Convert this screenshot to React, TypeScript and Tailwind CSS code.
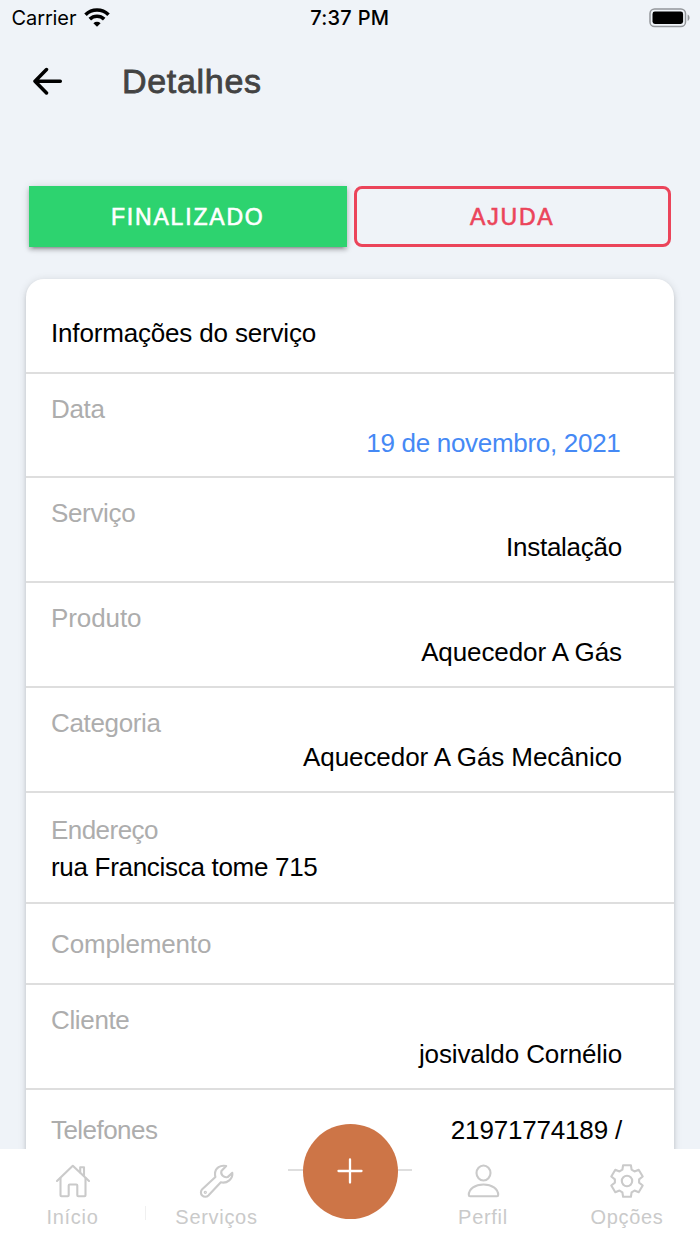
import * as React from "react"

const HELVETICA = "font-['Liberation_Sans',Arial,sans-serif]"

type ServiceField = {
  label: string
  value?: string
  layout: "stacked" | "block" | "inline"
  rowClass: string
  labelClass?: string
  valueClass?: string
}

const FIELDS: ServiceField[] = [
  { label: "Data", value: "19 de novembro, 2021", layout: "stacked", rowClass: "h-[104px]", valueClass: "text-[#4589f5] tracking-[-0.3px] pr-[1.5px]" },
  { label: "Serviço", value: "Instalação", layout: "stacked", rowClass: "h-[105px]", valueClass: "tracking-[-0.25px]" },
  { label: "Produto", value: "Aquecedor A Gás", layout: "stacked", rowClass: "h-[105px]", labelClass: "tracking-[-0.1px]", valueClass: "tracking-[-0.1px]" },
  { label: "Categoria", value: "Aquecedor A Gás Mecânico", layout: "stacked", rowClass: "h-[105px]", valueClass: "tracking-[-0.08px]" },
  { label: "Endereço", value: "rua Francisca tome 715", layout: "block", rowClass: "h-[111px]", labelClass: "tracking-[-0.55px]", valueClass: "tracking-[-0.3px]" },
  { label: "Complemento", layout: "inline", rowClass: "h-[81px]", labelClass: "tracking-[-0.15px]" },
  { label: "Cliente", value: "josivaldo Cornélio", layout: "stacked", rowClass: "h-[105px]", valueClass: "tracking-[-0.12px]" },
  { label: "Telefones", value: "21971774189 /", layout: "inline", rowClass: "h-[105px]", labelClass: "tracking-[-0.55px]", valueClass: "tracking-[-0.18px]" },
]

function StatusBar() {
  return (
    <div className="h-9 grid grid-cols-3 items-center pl-[11.5px] pr-[9px] font-[Inter,sans-serif] text-[20px] leading-9 text-black">
      <div className="flex items-center gap-2">
        <span className="tracking-[-0.1px]">Carrier</span>
        <svg className="-mt-[2px]" width="26" height="19" viewBox="0 0 26 19" fill="none" stroke="#000" strokeWidth="3.6">
          <path d="M1.5 6.7a16.4 16.4 0 0 1 23 0" />
          <path d="M5.8 11.1a10.4 10.4 0 0 1 14.4 0" />
          <path d="M13 18.8l-3.6-3.6a5.2 5.2 0 0 1 7.2 0z" fill="#000" stroke="none" />
        </svg>
      </div>
      <span className="text-center font-medium tracking-[0.25px] pr-[3px]">7:37 PM</span>
      <svg className="justify-self-end -mt-px" width="42" height="20" viewBox="0 0 42 20" fill="none">
        <rect x="1" y="1" width="35.5" height="17.6" rx="4.6" stroke="#94979b" strokeWidth="1.5" />
        <rect x="3.5" y="3.6" width="30.6" height="12.4" rx="2.4" fill="#000" />
        <path d="M38.6 6.6c2.6 1 2.6 5.4 0 6.4z" fill="#94979b" />
      </svg>
    </div>
  )
}

function FieldRow({ field }: { field: ServiceField }) {
  const { label, value, layout, rowClass, labelClass = "tracking-[-0.35px]", valueClass = "" } = field
  const caption = <span className={`text-[#adadad] ${labelClass}`}>{label}</span>

  if (layout === "stacked") {
    return (
      <div className={`border-b-2 border-[#dedede] pt-[18px] pl-[25px] pr-[52px] flex flex-col ${rowClass}`}>
        {caption}
        <span className={`text-right ${valueClass}`}>{value}</span>
      </div>
    )
  }
  if (layout === "block") {
    return (
      <div className={`border-b-2 border-[#dedede] pt-[20px] pl-[25px] pr-[52px] flex flex-col gap-[3px] ${rowClass}`}>
        {caption}
        <span className={valueClass}>{value}</span>
      </div>
    )
  }
  return (
    <div className={`border-b-2 border-[#dedede] pt-[23px] pl-[25px] pr-[52px] flex justify-between ${rowClass}`}>
      {caption}
      {value && <span className={valueClass}>{value}</span>}
    </div>
  )
}

function TabButton({ label, className, children }: { label: string; className: string; children: React.ReactNode }) {
  return (
    <button className={`w-36 pt-[14px] flex flex-col items-center text-[#cacaca] ${className}`}>
      <svg width="36" height="36" viewBox="0 0 36 36" fill="none" stroke="currentColor" strokeWidth="2.1" strokeLinecap="round" strokeLinejoin="round">
        {children}
      </svg>
      <span className="mt-1 text-[20px] leading-7 tracking-[0.7px]">{label}</span>
    </button>
  )
}

function TabBar() {
  return (
    <nav className="relative h-[95px] shrink-0 bg-white flex">
      <TabButton label="Início" className="pl-px">
        <path d="M2 18 17.8 2.8 34 18" />
        <path d="M5.5 15v17.3q0 1 1 1h6.2q1 0 1-1V22.5q0-1 1-1h6.6q1 0 1 1v9.8q0 1 1 1h6.2q1 0 1-1V15" />
        <path d="M25.2 9.5V4.3H29v8.500" />
      </TabButton>
      <TabButton label="Serviços" className="pl-px">
        <path d="M27.2 3.1c-5.500-1.500-11.200 1.800-11.200 8q0 1.600.4 2.900L3.200 26.300a4.300 4.300 0 0 0 6.200 6.200L21.800 19.300c6.400 1.500 12.400-3.600 11.500-9.400l-4.700 4.200c-3.800 1-7.200-2.300-6.200-6z" />
        <circle cx="6.3" cy="29.3" r="0.6" />
      </TabButton>
      <div className="w-[124px] h-full">
        <div className="mt-[20px] h-[2px] bg-[#dedede]" />
      </div>
      <TabButton label="Perfil" className="pr-[2px]">
        <ellipse cx="18.500" cy="10" rx="7" ry="7.5" />
        <path d="M3.800 32c0-6.500 6.500-10.500 14.700-10.500S33.200 25.500 33.200 32q0 1.200-1.200 1.200H5q-1.200 0-1.200-1.200z" />
      </TabButton>
      <TabButton label="Opções" className="pr-[2px]">
        {/* six-toothed gear */}
        <path d="M14.1 2.200h7.800l.7 4.500 2.900 1.700 4.200-1.600 4 6.700-3.600 2.900v3.200l3.600 2.900-4 6.700-4.200-1.600-2.900 1.700-.7 4.500h-7.800l-.7-4.500-2.900-1.700-4.200 1.600-4-6.700 3.600-2.900v-3.200l-3.600-2.900 4-6.700 4.200 1.600 2.900-1.700z" />
        <circle cx="18" cy="18" r="5.2" />
      </TabButton>
      <span className="absolute left-[145px] top-[57px] w-px h-[14px] bg-[#f0f0f0]" />
      <button className="absolute left-[302.5px] top-[-25.5px] size-[95px] rounded-full bg-[#cd7547] flex items-center justify-center">
        <svg width="26" height="26" viewBox="0 0 26 26" stroke="#fff" strokeWidth="2.3" strokeLinecap="round">
          <path d="M13 1.5v23M1.5 13h23" />
        </svg>
      </button>
    </nav>
  )
}

export default function App() {
  return (
    <div className={`w-[700px] h-[1244px] overflow-hidden flex flex-col bg-[#eff3f8] text-black ${HELVETICA}`}>
      <StatusBar />

      <header className="h-[90px] shrink-0 flex items-center pl-8 gap-[59px]">
        <svg width="31" height="28" viewBox="0 0 31 28" fill="none" stroke="#000" strokeWidth="3.5" strokeLinecap="round" strokeLinejoin="round">
          <path d="M14.5 2.5 3 14.2l11.500 11.700M3.500 14.2h24.800" />
        </svg>
        <h1 className="text-[34px] leading-10 text-[#434343] tracking-[0.7px] [-webkit-text-stroke:0.8px_#434343]">Detalhes</h1>
      </header>

      <main className="flex-1 min-h-0 overflow-hidden">
        {/* Actions */}
        <div className="pt-[60px] pl-[29px] pr-[29px] flex gap-[7px] text-[23px] tracking-[1.8px]">
          <button className="w-[318px] h-[61px] pt-px bg-[#2dd36f] text-white [-webkit-text-stroke:0.6px_#fff] shadow-[0_5px_2px_-4px_rgba(0,0,0,0.2),0_3px_4px_0_rgba(0,0,0,0.2),0_1px_8px_0_rgba(0,0,0,0.14)]">
            FINALIZADO
          </button>
          <button className="w-[318px] h-[61px] pt-px border-[3px] border-[#eb445a] rounded-lg text-[#eb445a] [-webkit-text-stroke:0.6px_#eb445a]">
            AJUDA
          </button>
        </div>

        {/* Service info */}
        <section className="mt-8 mx-[26px] bg-white rounded-t-[18px] text-[26px] leading-[34px] shadow-[0_5px_2px_-4px_rgba(0,0,0,0.2),0_3px_4px_0_rgba(0,0,0,0.12),0_1px_9px_0_rgba(0,0,0,0.12)]">
          <h2 className="h-[95px] pt-[37px] pl-[25px] border-b-2 border-[#dedede] tracking-[-0.17px]">Informações do serviço</h2>
          {FIELDS.map((field) => <FieldRow key={field.label} field={field} />)}
        </section>
      </main>

      <TabBar />
    </div>
  )
}
